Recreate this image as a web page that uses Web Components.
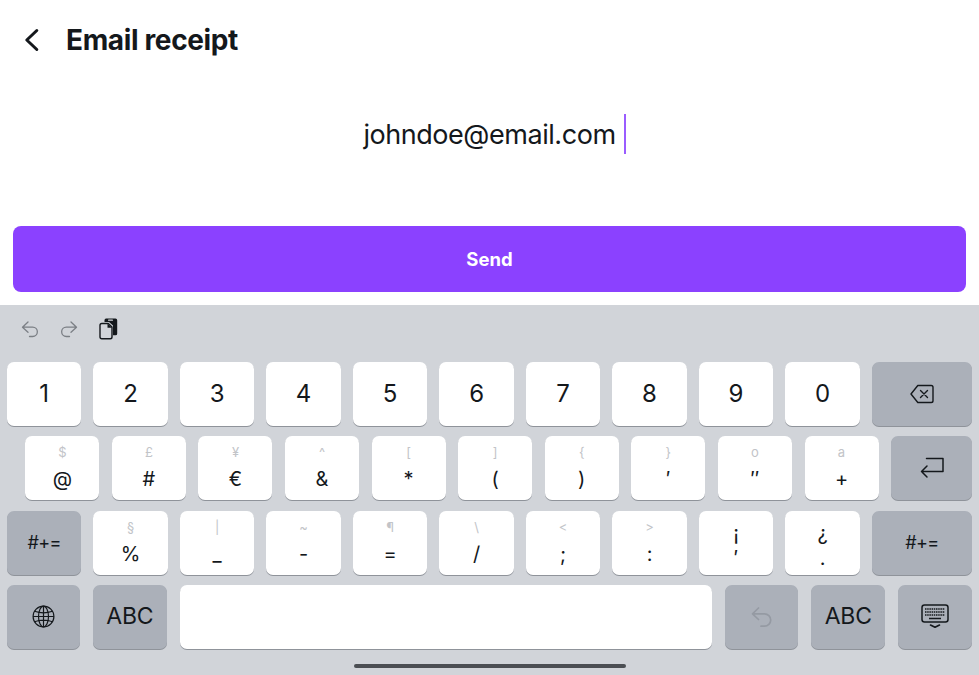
<!doctype html>
<html lang="en">
<head>
<meta charset="utf-8">
<title>Email receipt</title>
<style>
  html, body { margin: 0; background: #fff; }
  body { width: 979px; height: 675px; overflow: hidden; font-family: Inter, "Liberation Sans", sans-serif; color: #14181c; }
  receipt-screen { height: 675px; }
</style>
</head>
<body>
<receipt-screen>
  <app-header>Email receipt</app-header>
  <email-field>johndoe@email.com</email-field>
  <send-button>Send</send-button>
  <ios-keyboard slot="keyboard">
    <kb-toolbar></kb-toolbar>
    <kb-row>
      <kb-key w="74.3">1</kb-key><kb-key w="74.3">2</kb-key><kb-key w="74.3">3</kb-key><kb-key w="74.3">4</kb-key><kb-key w="74.3">5</kb-key>
      <kb-key w="74.3">6</kb-key><kb-key w="74.3">7</kb-key><kb-key w="74.3">8</kb-key><kb-key w="74.3">9</kb-key><kb-key w="74.3">0</kb-key>
      <kb-key w="100" dark><kb-icon name="backspace"></kb-icon></kb-key>
    </kb-row>
    <kb-row start="25.3" gap="12.58">
      <kb-key w="74" hint="$" sym>@</kb-key><kb-key w="74" hint="£" sym>#</kb-key><kb-key w="74" hint="¥" sym>€</kb-key><kb-key w="74" hint="^" sym>&amp;</kb-key><kb-key w="74" hint="[" sym>*</kb-key>
      <kb-key w="74" hint="]" sym>(</kb-key><kb-key w="74" hint="{" sym>)</kb-key><kb-key w="74" hint="}" sym>′</kb-key><kb-key w="74" hint="o" sym>″</kb-key><kb-key w="74" hint="a" sym>+</kb-key>
      <kb-key w="81" dark><kb-icon name="return"></kb-icon></kb-key>
    </kb-row>
    <kb-row>
      <kb-key w="74.3" dark small>#+=</kb-key>
      <kb-key w="74.3" hint="§" sym>%</kb-key><kb-key w="74.3" hint="|" sym>_</kb-key><kb-key w="74.3" hint="~" sym>-</kb-key><kb-key w="74.3" hint="¶" sym>=</kb-key><kb-key w="74.3" hint="\" sym>/</kb-key>
      <kb-key w="74.3" hint="&lt;" sym>;</kb-key><kb-key w="74.3" hint="&gt;" sym>:</kb-key><kb-key w="74.3" hint="¡" sym dark-hint>′</kb-key><kb-key w="74.3" hint="¿" sym dark-hint>.</kb-key>
      <kb-key w="100" dark small>#+=</kb-key>
    </kb-row>
    <kb-row gap="12.8">
      <kb-key w="73" dark><kb-icon name="globe"></kb-icon></kb-key>
      <kb-key w="74" dark abc>ABC</kb-key>
      <kb-key w="532.5"></kb-key>
      <kb-key w="73.5" dark><kb-icon name="undo"></kb-icon></kb-key>
      <kb-key w="74" dark abc>ABC</kb-key>
      <kb-key w="74" dark><kb-icon name="hide"></kb-icon></kb-key>
    </kb-row>
    <home-indicator></home-indicator>
  </ios-keyboard>
</receipt-screen>

<script>
class ReceiptScreen extends HTMLElement {
  constructor() {
    super();
    this.attachShadow({ mode: "open" });
    this.shadowRoot.innerHTML = /* html */`
      <style>
        :host { display: flex; flex-direction: column; }
        .top { height: 305px; display: flex; flex-direction: column; }
      </style>
      <div class="top"><slot></slot></div>
      <slot name="keyboard"></slot>`;
  }
}

class AppHeader extends HTMLElement {
  constructor() {
    super();
    this.attachShadow({ mode: "open" });
    this.shadowRoot.innerHTML = /* html */`
      <style>
        :host { display: flex; align-items: center; height: 80px; padding-left: 24px; }
        svg { width: 16px; height: 24px; margin-right: 26px; flex: none; }
        span { font-size: 28px; font-weight: 700; letter-spacing: -0.36px; color: #14181c; }
      </style>
      <svg viewBox="0 0 16 24" fill="none" stroke="#14181c" stroke-width="3" stroke-linecap="round" stroke-linejoin="round">
        <path d="M12.800 2.500 2.800 12l10 9.500"/>
      </svg>
      <span><slot></slot></span>`;
  }
}

class EmailField extends HTMLElement {
  constructor() {
    super();
    this.attachShadow({ mode: "open" });
    this.shadowRoot.innerHTML = /* html */`
      <style>
        :host { display: flex; justify-content: center; align-items: center; height: 110px; }
        .text { font-size: 27px; letter-spacing: -0.45px; line-height: 40px; color: #14181c; }
        .caret { width: 2px; height: 40px; background: #9a5cff; margin: -2px -10.500px 0 8.500px; }
      </style>
      <span class="text"><slot></slot></span><span class="caret"></span>`;
  }
}

class SendButton extends HTMLElement {
  constructor() {
    super();
    this.attachShadow({ mode: "open" });
    this.shadowRoot.innerHTML = /* html */`
      <style>
        :host { display: flex; justify-content: center; align-items: center; height: 66px; margin: 36px 13px 0; background: #8b41ff; border-radius: 8px; color: #fff; font-size: 18.500px; font-weight: 700; }
      </style>
      <slot></slot>`;
  }
}

class IosKeyboard extends HTMLElement {
  constructor() {
    super();
    this.attachShadow({ mode: "open" });
    this.shadowRoot.innerHTML = /* html */`
      <style>
        :host { display: flex; flex-direction: column; height: 370px; background: #d1d4d9; }
      </style>
      <slot></slot>`;
  }
}

class KbToolbar extends HTMLElement {
  constructor() {
    super();
    this.attachShadow({ mode: "open" });
    this.shadowRoot.innerHTML = /* html */`
      <style>
        :host { display: flex; align-items: center; gap: 21px; height: 57px; padding: 0 0 9px 21px; box-sizing: border-box; }
        svg { display: block; }
      </style>
      <svg width="18" height="20" viewBox="0 0 18 20" fill="none" stroke="#7b7f85" stroke-width="1.300" stroke-linecap="round" stroke-linejoin="round">
        <path d="M7 3 1.500 8.200 7 13.200M1.500 8.200h10.200a4.600 4.600 0 0 1 0 9.300H8.500"/>
      </svg>
      <svg width="18" height="20" viewBox="0 0 18 20" fill="none" stroke="#7b7f85" stroke-width="1.300" stroke-linecap="round" stroke-linejoin="round">
        <path d="M11 3l5.500 5.200L11 13.200M16.500 8.200H6.300a4.600 4.600 0 0 0 0 9.300H9.500"/>
      </svg>
      <svg width="19" height="22" viewBox="0 0 19 22">
        <path d="M5.500 2Q5.700.500 7 .500h9.500q1.700 0 1.700 1.700v13.500q0 1.600-1.700 1.600H14V7.500L10 4H5.500z" fill="#14181c"/>
        <rect x="9" y="1.500" width="5" height="1.300" rx=".6" fill="#d1d4d9"/>
        <path d="M2.800 5.500h6.400L13 9.100v9.900q0 1.800-1.800 1.800H2.800Q1 20.800 1 19V7.300Q1 5.500 2.800 5.500z" fill="#d1d4d9" stroke="#14181c" stroke-width="1.400"/>
        <path d="M8.500 5.500v4.300H13z" fill="#14181c"/>
      </svg>`;
  }
}

class KbRow extends HTMLElement {
  constructor() {
    super();
    this.attachShadow({ mode: "open" });
    this.shadowRoot.innerHTML = /* html */`
      <style>
        :host { display: flex; gap: var(--gap, 12.200px); height: 64px; padding-left: var(--start, 7px); margin-bottom: 10.300px; }
      </style>
      <slot></slot>`;
  }
  connectedCallback() {
    if (this.hasAttribute("start")) this.style.setProperty("--start", this.getAttribute("start") + "px");
    if (this.hasAttribute("gap")) this.style.setProperty("--gap", this.getAttribute("gap") + "px");
  }
}

class KbKey extends HTMLElement {
  constructor() {
    super();
    this.attachShadow({ mode: "open" });
    this.shadowRoot.innerHTML = /* html */`
      <style>
        :host { display: flex; flex: none; box-sizing: border-box; height: 64px; border-radius: 7px; background: #fff; box-shadow: 0 1px 0 #8f939a; align-items: center; justify-content: center; flex-direction: column; font-size: 24px; color: #14181c; line-height: 1; }
        :host([dark]) { background: #abb0b9; }
        :host([small]) { font-size: 18px; letter-spacing: -0.6px; }
        :host([abc]) { font-size: 23px; letter-spacing: -0.2px; }
        :host([sym]) { justify-content: flex-start; font-size: 20px; }
        .hint { display: none; font-size: 13px; line-height: 16px; margin-top: 8px; color: #c2c4c8; }
        :host([sym]) .hint { display: block; }
        :host([dark-hint]) .hint { font-size: 20px; line-height: 20px; margin-top: 12px; color: #14181c; }
        :host([sym]) .main { display: block; line-height: 24px; margin-top: 7px; }
        :host([dark-hint]) .main { margin-top: 3px; }
      </style>
      <span class="hint"></span><span class="main"><slot></slot></span>`;
  }
  connectedCallback() {
    this.style.width = this.getAttribute("w") + "px";
    this.shadowRoot.querySelector(".hint").textContent = this.getAttribute("hint") || "";
  }
}

const KB_ICONS = {
  backspace: `<svg width="24" height="20" viewBox="0 0 24 20" fill="none" stroke="#14181c" stroke-width="1.400" stroke-linejoin="round" stroke-linecap="round"><path d="M7.800 1.500h13.400q1.800 0 1.800 1.800v13.400q0 1.800-1.800 1.800H7.800L1 10z"/><path d="m10.500 6.500 7 7M17.500 6.500l-7 7"/></svg>`,
  return: `<svg width="24" height="22" viewBox="0 0 24 22" fill="none" stroke="#14181c" stroke-width="1.500" stroke-linejoin="round" stroke-linecap="round"><path d="M6.500 1.500H23v13H1.500M7 9l-5.500 5.500L7 20"/></svg>`,
  undo: `<svg width="21" height="22" viewBox="0 0 21 22" fill="none" stroke="#959aa3" stroke-width="1.700" stroke-linejoin="round" stroke-linecap="round"><path d="M7.500 2 1.500 7.800 7.500 13.500M1.500 7.800H13.500a6.200 6.200 0 0 1 0 12.400H10"/></svg>`,
  globe: `<svg width="23" height="23" viewBox="0 0 23 23" fill="none" stroke="#14181c" stroke-width="1.200"><circle cx="11.500" cy="11.500" r="10.400"/><ellipse cx="11.500" cy="11.500" rx="5" ry="10.400"/><path d="M11.500 1v21M1.100 11.500h20.800M2.500 6.300q9 3 18 0M2.500 16.700q9-3 18 0"/></svg>`,
  hide: `<svg width="28" height="25" viewBox="0 0 28 25" fill="none" stroke="#14181c"><rect x="1" y="1" width="26" height="17" rx="2.500" stroke-width="1.500"/><path d="M4 5h20M4 8h20M4 11h20" stroke-width="1.500" stroke-dasharray="1.500 .7"/><path d="M8 14.500h12" stroke-width="1.500"/><path d="m9.500 21 4.500 2.200 4.500-2.200" stroke-width="1.600" stroke-linecap="round" stroke-linejoin="round"/></svg>`
};

class KbIcon extends HTMLElement {
  constructor() {
    super();
    this.attachShadow({ mode: "open" });
  }
  connectedCallback() {
    this.shadowRoot.innerHTML = `<style>:host { display: flex; } svg { display: block; }</style>${KB_ICONS[this.getAttribute("name")]}`;
  }
}

class HomeIndicator extends HTMLElement {
  constructor() {
    super();
    this.attachShadow({ mode: "open" });
    this.shadowRoot.innerHTML = `<style>:host { display: block; width: 272px; height: 4px; margin: 5px auto 0; border-radius: 2px; background: #4b4e53; }</style>`;
  }
}

customElements.define("receipt-screen", ReceiptScreen);
customElements.define("app-header", AppHeader);
customElements.define("email-field", EmailField);
customElements.define("send-button", SendButton);
customElements.define("ios-keyboard", IosKeyboard);
customElements.define("kb-toolbar", KbToolbar);
customElements.define("kb-row", KbRow);
customElements.define("kb-key", KbKey);
customElements.define("kb-icon", KbIcon);
customElements.define("home-indicator", HomeIndicator);
</script>
</body>
</html>
